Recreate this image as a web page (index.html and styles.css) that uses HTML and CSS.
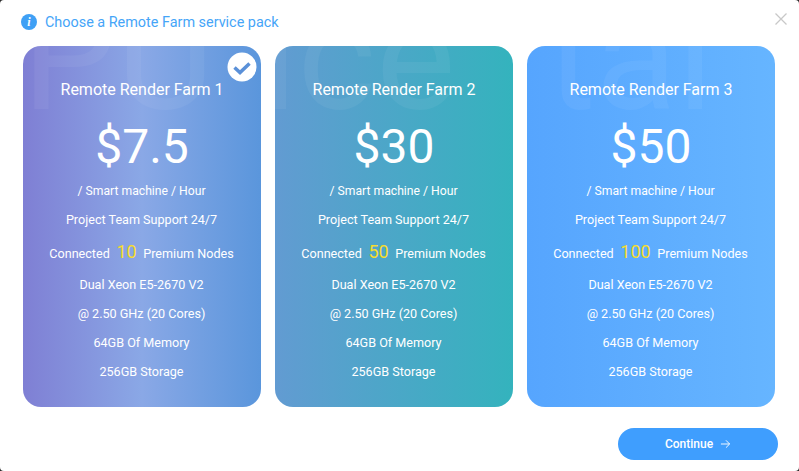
FILE: index.html
```html
<!DOCTYPE html>
<html lang="en">
<head>
  <meta charset="UTF-8" />
  <title>Remote Farm service pack</title>
  <link rel="stylesheet" href="styles.css">
</head>
<body>
  <div class="modal">
    <div class="modal-header">
      <span class="info-icon">i</span>
      <h1>Choose a Remote Farm service pack</h1>
      <svg class="close-icon" viewBox="0 0 12 12" width="12" height="12"><path d="M0.500 0.500l11 11M11.500 0.500l-11 11"/></svg>
    </div>

    <div class="packs">
      <div class="pack pack-1">
        <svg class="check" viewBox="0 0 30 30" width="30" height="30"><circle cx="15" cy="15" r="14.500"/><path d="M7.500 15.500l5.500 5L22.500 11.500"/></svg>
        <h2>Remote Render Farm 1</h2>
        <div class="price">$7.5</div>
        <ul>
          <li class="rate">/ Smart machine / Hour</li>
          <li>Project Team Support 24/7</li>
          <li class="nodes">Connected <b>10</b> Premium Nodes</li>
          <li>Dual Xeon E5-2670 V2</li>
          <li>@ 2.50 GHz (20 Cores)</li>
          <li>64GB Of Memory</li>
          <li>256GB Storage</li>
        </ul>
      </div>

      <div class="pack pack-2">
        <h2>Remote Render Farm 2</h2>
        <div class="price">$30</div>
        <ul>
          <li class="rate">/ Smart machine / Hour</li>
          <li>Project Team Support 24/7</li>
          <li class="nodes">Connected <b>50</b> Premium Nodes</li>
          <li>Dual Xeon E5-2670 V2</li>
          <li>@ 2.50 GHz (20 Cores)</li>
          <li>64GB Of Memory</li>
          <li>256GB Storage</li>
        </ul>
      </div>

      <div class="pack pack-3">
        <h2>Remote Render Farm 3</h2>
        <div class="price">$50</div>
        <ul>
          <li class="rate">/ Smart machine / Hour</li>
          <li>Project Team Support 24/7</li>
          <li class="nodes">Connected <b>100</b> Premium Nodes</li>
          <li>Dual Xeon E5-2670 V2</li>
          <li>@ 2.50 GHz (20 Cores)</li>
          <li>64GB Of Memory</li>
          <li>256GB Storage</li>
        </ul>
      </div>

      <div class="watermark">
        <span>PU</span>
        <span>ice</span>
        <span>tal</span>
      </div>
    </div>

    <div class="modal-footer">
      <button class="continue">Continue
        <svg viewBox="0 0 12 10" width="11" height="10"><path d="M1 5h9.500M6.500 1l4 4-4 4"/></svg>
      </button>
    </div>
  </div>
</body>
</html>
```

FILE: styles.css
```css
* {
  box-sizing: border-box;
}

html, body {
  margin: 0;
  padding: 0;
  height: 100%;
  background-color: #2a2a2a;
  overflow: hidden;
}

body {
  font-family: Roboto, sans-serif;
  color: white;
}

.modal {
  width: 799px;
  height: 471px;
  padding: 12px 21px 0 23px;
  background-color: white;
  border-radius: 4px;
}

.modal-header {
  display: flex;
  align-items: center;
  height: 20px;
}

.info-icon {
  width: 16px;
  height: 16px;
  border-radius: 50%;
  background-color: #3fa0f5;
  color: white;
  font: italic bold 12px/16px "Liberation Serif", serif;
  text-align: center;
  margin-left: -2px;
}

h1 {
  margin: 0 0 0 8px;
  font-size: 14.400px;
  font-weight: 400;
  color: #45a5f8;
  flex: 1;
}

.close-icon {
  fill: none;
  stroke: #c8c8c8;
  stroke-width: 1.300;
  align-self: flex-start;
  margin: 1px -9px 0 0;
}

.packs {
  position: relative;
  display: flex;
  gap: 14px;
  margin-top: 14px;
}

.pack {
  width: 238px;
  height: 361px;
  border-radius: 18px;
  padding-top: 34px;
  text-align: center;
  position: relative;
}

.pack-1 {
  background: linear-gradient(90deg, #7f7fd4 0%, #8aa8e6 50%, #5a96dc 100%);
}

.pack-2 {
  background: linear-gradient(90deg, #629bd2 0%, #34b3bd 100%);
}

.pack-3 {
  width: 248px;
  background: linear-gradient(90deg, #56a5fe 0%, #66b5ff 100%);
}

/* big faded word behind the card titles, white so it only shows on the cards */
.watermark {
  position: absolute;
  top: 0;
  left: -1px;
  display: flex;
  gap: 47px;
  height: 66px;
  width: 700px;
  overflow: hidden;
  font-size: 150px;
  line-height: 24px;
  color: rgba(255, 255, 255, 0.055);
  white-space: nowrap;
  pointer-events: none;
}

.watermark span:last-child {
  margin-left: 44px;
}

.check {
  position: absolute;
  top: 6px;
  right: 4px;
  z-index: 1;
}

.check circle {
  fill: white;
}

.check path {
  fill: none;
  stroke: #5a90d8;
  stroke-width: 3.500;
}

h2 {
  position: relative;
  z-index: 1;
  margin: 0;
  font-size: 16px;
  font-weight: 400;
  line-height: 20px;
}

.price {
  font-size: 48px;
  line-height: 56px;
  margin-top: 19px;
}

ul {
  list-style: none;
  margin: 1px 0 0;
  padding: 0 1px 0 0;
  font-size: 12.600px;
}

li {
  height: 29px;
  line-height: 29px;
}

.rate {
  font-size: 12.200px;
  line-height: 31px;
}

.nodes {
  height: 36px;
  line-height: 40px;
}

.nodes b {
  font-size: 18px;
  font-weight: 400;
  line-height: 18px;
  color: #f7dc2c;
  margin: 0 3.500px;
}

.modal-footer {
  display: flex;
  justify-content: flex-end;
  margin-top: 21px;
}

.continue {
  display: flex;
  align-items: center;
  justify-content: center;
  gap: 7px;
  width: 160px;
  height: 32px;
  border: none;
  border-radius: 16px;
  background-color: #3f9efe;
  color: white;
  font-family: Roboto, sans-serif;
  font-size: 12px;
  font-weight: 500;
}

.continue svg {
  fill: none;
  stroke: white;
  stroke-width: 1;
}
```
